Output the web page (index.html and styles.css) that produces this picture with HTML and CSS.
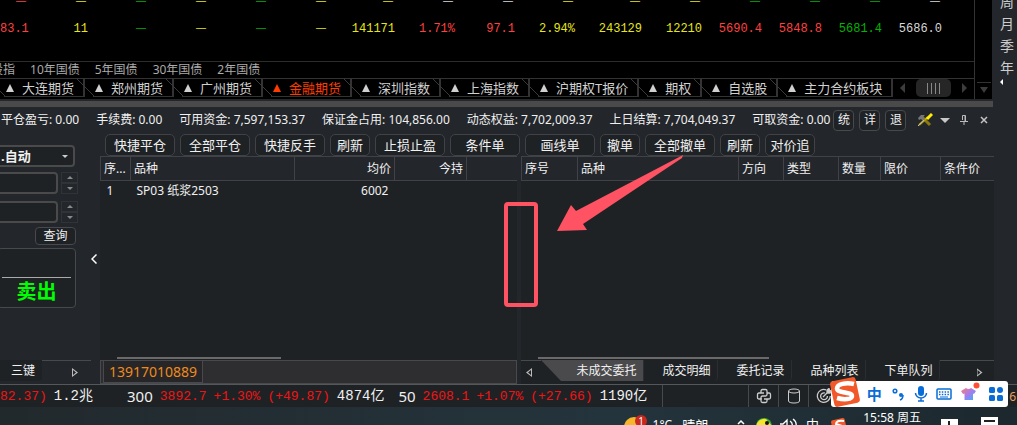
FILE: index.html
```html
<!DOCTYPE html>
<html lang="zh-CN">
<head>
    <meta charset="UTF-8">
    <meta name="viewport" content="width=device-width, initial-scale=1.0">
    <title>期货交易</title>
    <link rel="stylesheet" href="styles.css">
</head>
<body>
    <div class="top">
        <div class="market">
            <table class="quotes">
                <colgroup>
                    <col class="c-first"><col><col><col><col><col><col class="c-wide"><col>
                    <col><col><col class="c-wide"><col><col><col><col><col><col class="c-rest">
                </colgroup>
                <tr class="dashes">
                    <td class="red">—</td><td class="yellow">—</td><td class="green">—</td><td class="yellow">—</td>
                    <td class="green">—</td><td class="yellow">—</td><td class="yellow">—</td><td>—</td>
                    <td>—</td><td class="yellow">—</td><td class="yellow">—</td><td class="yellow">—</td>
                    <td class="green">—</td><td class="green">—</td><td class="green">—</td><td>—</td><td></td>
                </tr>
                <tr>
                    <td class="red">83.1</td><td class="yellow">11</td><td class="green dash">—</td><td class="yellow dash">—</td>
                    <td class="green dash">—</td><td class="yellow dash">—</td><td class="yellow">141171</td><td class="red">1.71%</td>
                    <td class="red">97.1</td><td class="yellow">2.94%</td><td class="yellow">243129</td><td class="yellow">12210</td>
                    <td class="red">5690.4</td><td class="red">5848.8</td><td class="green">5681.4</td><td>5686.0</td><td></td>
                </tr>
            </table>
            <div class="groups">
                <span>股指</span><span>10年国债</span><span>5年国债</span><span>30年国债</span><span>2年国债</span>
            </div>
            <div class="boards">
                <button>大连期货</button>
                <button>郑州期货</button>
                <button>广州期货</button>
                <button class="active">金融期货</button>
                <button>深圳指数</button>
                <button>上海指数</button>
                <button>沪期权T报价</button>
                <button>期权</button>
                <button>自选股</button>
                <button>主力合约板块</button>
                <div class="hscroll">
                    <i class="tri-left"></i>
                    <div class="thumb"><i></i><i></i><i></i><i></i></div>
                    <i class="tri-right"></i>
                </div>
            </div>
        </div>
        <div class="vscroll"><i class="tri-down"></i></div>
        <div class="periods">
            <span>周</span><span>月</span><span>季</span><span>年</span>
            <i class="tri-left"></i>
        </div>
    </div>

    <div class="splitter"></div>

    <div class="trade">
        <div class="info">
            <span>平仓盈亏: 0.00</span>
            <span>手续费: 0.00</span>
            <span>可用资金: 7,597,153.37</span>
            <span>保证金占用: 104,856.00</span>
            <span>动态权益: 7,702,009.37</span>
            <span>上日结算: 7,704,049.37</span>
            <span>可取资金: 0.00</span>
            <div class="tools">
                <button>统</button>
                <button>详</button>
                <button>退</button>
            </div>
            <svg class="wrench" width="16" height="14" viewBox="0 0 16 14">
                <path d="M4 3l9 9" stroke="#8c7a10" stroke-width="3"/>
                <path d="M2 12l9-8" stroke="#b9a800" stroke-width="2"/>
                <path d="M10 6l5-5" stroke="#ffee00" stroke-width="3"/>
                <path d="M1 5l3-3h4l-2 2 2 2-2 2-2-2-2 1z" fill="#777"/>
                <path d="M1 13l6-6" stroke="#bbb" stroke-width="1"/>
            </svg>
            <i class="tri-menu"></i>
            <svg class="pin" width="8" height="10" viewBox="0 0 8 10" fill="none" stroke="#bbb">
                <path d="M2.500 5V.5h3V6M0 6.500h8M4 7v3M5 1v5"/>
            </svg>
            <svg class="close" width="8" height="8" viewBox="0 0 8 8" stroke="#c4c4c4" stroke-width="1.500">
                <path d="M1 1l6 6M7 1l-6 6"/>
            </svg>
        </div>

        <div class="body">
            <div class="order">
                <div class="combo">
                    <select aria-label="手数模式"><option>.自动</option></select>
                    <i class="tri-down"></i>
                </div>
                <div class="spin">
                    <input type="text" aria-label="手数">
                    <div class="steps"><button aria-label="加"><i class="tri-up"></i></button><button aria-label="减"><i class="tri-down"></i></button></div>
                </div>
                <div class="spin">
                    <input type="text" aria-label="价格">
                    <div class="steps"><button aria-label="加"><i class="tri-up"></i></button><button aria-label="减"><i class="tri-down"></i></button></div>
                </div>
                <button class="query">查询</button>
                <button class="sell"><span>卖出</span></button>
                <button class="fold" aria-label="收起">
                    <svg width="6" height="10" viewBox="0 0 6 10" fill="none" stroke="#fff" stroke-width="1.500"><path d="M5.500.5L1 5l4.500 4.500"/></svg>
                </button>
                <div class="order-tabs">
                    <button>三键</button>
                    <div class="rest"><i class="play"></i></div>
                </div>
            </div>

            <div class="main">
                <div class="actions">
                    <button class="w4">快捷平仓</button>
                    <button class="w4">全部平仓</button>
                    <button class="w4">快捷反手</button>
                    <button class="w2">刷新</button>
                    <button class="w4">止损止盈</button>
                    <button class="w4">条件单</button>
                    <button class="w4">画线单</button>
                    <button class="w2">撤单</button>
                    <button class="w4">全部撤单</button>
                    <button class="w2">刷新</button>
                    <button class="w3">对价追</button>
                </div>
                <div class="panes">
                    <div class="pane positions">
                        <table class="grid">
                            <colgroup><col class="p1"><col class="p2"><col class="p3"><col class="p4"><col></colgroup>
                            <tr><th>序...</th><th>品种</th><th class="num">均价</th><th class="num">今持</th><th></th></tr>
                            <tr><td>1</td><td>SP03 纸浆2503</td><td class="num">6002</td><td></td><td></td></tr>
                        </table>
                        <div class="bar"></div>
                        <div class="accounts"><button>13917010889</button></div>
                    </div>
                    <div class="pane pending">
                        <table class="grid">
                            <colgroup><col class="o1"><col class="o2"><col class="o3"><col class="o4"><col class="o5"><col class="o6"><col></colgroup>
                            <tr><th>序号</th><th>品种</th><th>方向</th><th>类型</th><th>数量</th><th>限价</th><th>条件价</th></tr>
                        </table>
                        <div class="bar"></div>
                        <div class="views">
                            <div class="prev"><i class="play back"></i></div>
                            <button class="active">未成交委托</button>
                            <button>成交明细</button>
                            <button>委托记录</button>
                            <button>品种列表</button>
                            <button>下单队列</button>
                            <div class="rest"><i class="play"></i></div>
                        </div>
                    </div>
                </div>
            </div>
        </div>

        <!-- marker over the divider between the two tables -->
        <svg class="mark" width="190" height="160" viewBox="0 0 190 160">
            <rect x="6" y="54" width="30" height="101" rx="2" fill="none" stroke="#ff5262" stroke-width="4"/>
            <path d="M57 81L71 55 76 61 183 5 182 8 83 74 87 80z" fill="#ff5262"/>
        </svg>
    </div>

    <div class="status">
        <div class="index"><b>82.37)</b><span>1.2兆</span></div>
        <div class="index"><strong>300</strong><b>3892.7</b><b>+1.30%</b><b>(+49.87)</b><span>4874亿</span></div>
        <div class="index"><strong>50</strong><b>2608.1</b><b>+1.07%</b><b>(+27.66)</b><span>1190亿</span></div>
        <div class="cells">
            <div class="cell gap"></div>
            <div class="cell">
                <svg width="16" height="16" viewBox="0 0 16 16" fill="none" stroke="#ccc" stroke-width="1.300">
                    <path d="M5 5V3q0-1.500 1.500-1.500h3Q11 1.500 11 3v3.500Q11 8 9.500 8h-3Q5 8 5 9.500V11H3q-1.500 0-1.500-1.500v-3Q1.500 5 3 5h5"/>
                    <path d="M11 5h2q1.500 0 1.500 1.500v3Q14.500 11 13 11H8M5 10v3q0 1.500 1.500 1.500h3Q11 14.500 11 13v-2"/>
                </svg>
            </div>
            <div class="cell">
                <svg width="14" height="16" viewBox="0 0 14 16" fill="none" stroke="#ccc">
                    <ellipse cx="7" cy="3" rx="5.500" ry="2"/><path d="M1.500 3v10c0 2.700 11 2.700 11 0V3"/>
                </svg>
            </div>
            <div class="cell">
                <svg width="16" height="16" viewBox="0 0 16 16" fill="none" stroke="#ccc" stroke-width="1.300">
                    <path d="M10 1.800A6.500 6.500 0 1 0 14.300 8M9 5a3.400 3.400 0 1 0 2.400 3"/><path d="M7 9l5-5M11 2v3h3l1.500-2-2-.5L13 .5z" fill="#ccc"/>
                </svg>
            </div>
        </div>
        <span class="tail">6</span>

        <div class="ime">
            <svg class="sogou" width="32" height="32" viewBox="0 0 32 32">
                <rect x="3" y="3" width="26" height="26" rx="3" fill="#f1592a" transform="rotate(-12 16 16)"/>
                <path d="M25 8C17 6 8 8 8 12.500c0 5 15 3 15 7.500 0 3.500-8 4-15 2" fill="none" stroke="#fff" stroke-width="4.500"/>
            </svg>
            <button class="zh">中</button>
            <svg width="14" height="16" viewBox="0 0 14 16"><circle cx="4" cy="5" r="1.800" fill="none" stroke="#0a6cd6" stroke-width="1.500"/><circle cx="10" cy="9" r="2" fill="#0a6cd6"/><path d="M12 9q0 4-3 5" fill="none" stroke="#0a6cd6" stroke-width="1.500"/></svg>
            <svg width="14" height="16" viewBox="0 0 14 16"><rect x="4" y="0" width="6" height="10" rx="3" fill="#0a6cd6"/><path d="M1.500 7a5.500 5 0 0 0 11 0M7 12v3M4 15h6" fill="none" stroke="#0a6cd6" stroke-width="1.500"/></svg>
            <svg width="16" height="12" viewBox="0 0 16 12"><rect x="1" y="1" width="14" height="10" rx="1" fill="none" stroke="#0a6cd6" stroke-width="1.500"/><path d="M3 4h10M3 6.500h10" stroke="#0a6cd6" stroke-width="1.500" stroke-dasharray="1.500 1.300"/><path d="M4 9h8" stroke="#0a6cd6"/></svg>
            <svg class="skin" width="19" height="19" viewBox="0 0 19 19">
                <defs><linearGradient id="shirt" x1="0" y1="0" x2="1" y2="1"><stop offset="0" stop-color="#ff7c72"/><stop offset=".5" stop-color="#a77bee"/><stop offset="1" stop-color="#2fb4ff"/></linearGradient></defs>
                <path d="M5 6q2.500 2 5 0l5 3-2 3-1-.5V18H3.500v-6.500L2 12 0 9z" fill="url(#shirt)"/>
                <circle cx="15.500" cy="3.500" r="3" fill="#ff4f32"/>
            </svg>
            <svg width="14" height="14" viewBox="0 0 14 14" fill="#0a6cd6"><rect width="6" height="6" rx="1.500"/><circle cx="11" cy="3" r="3"/><rect y="8" width="6" height="6" rx="1.500"/><rect x="8" y="8" width="6" height="6" rx="1.500"/></svg>
        </div>
    </div>

    <div class="taskbar">
        <svg class="weather" width="24" height="22" viewBox="0 0 24 22"><circle cx="11" cy="12" r="10" fill="#f5b62b"/><circle cx="18" cy="6" r="6" fill="#c8281e"/><text x="18" y="10" text-anchor="middle">1</text></svg>
        <span>1°C</span>
        <span class="sky">晴朗</span>
        <svg class="tray" width="110" height="18" viewBox="0 0 110 18">
            <path d="M2 17l3-3 3 3" fill="none" stroke="#fff" stroke-width="1.500"/>
            <circle cx="28" cy="19" r="8" fill="#35a834"/><path d="M20.500 17Q24 11 30 12l6 7H21z" fill="#f5e52a"/><circle cx="31" cy="16" r="2" fill="#111"/>
            <path d="M44 17h3l4-4v6M54 14q3 2 2 5M57 12q4 3 3 7" fill="none" stroke="#fff" stroke-width="1.300"/>
            <rect x="96" y="12" width="14" height="14" rx="2" fill="#f1592a" transform="rotate(-12 103 19)"/><path d="M108 14q-8-1-8 3l6 2" fill="none" stroke="#fff" stroke-width="2"/>
            <text x="70" y="22">中</text>
        </svg>
        <span class="clock">15:58 周五</span>
        <svg class="right" width="60" height="18" viewBox="0 0 60 18"><path d="M0 12h17v6H0zM40 10h17v8H40z" fill="#fff"/><path d="M8 14v4M43 14h11" stroke="#222" stroke-width="2"/></svg>
    </div>
</body>
</html>
```
FILE: styles.css
```css
* {
    box-sizing: border-box;
}
body {
    margin: 0;
    min-height: 100vh;
    display: flex;
    flex-direction: column;
    overflow: hidden;
    background-color: #23262b;
    color: #f0f0f0;
    font-family: "Noto Sans", "Noto Sans CJK SC", sans-serif;
    font-size: 12px;
    line-height: 16px;
}
button, select, input {
    font: inherit;
    color: inherit;
    background: none;
    border: 0;
    padding: 0;
    margin: 0;
    white-space: nowrap;
}
table {
    border-collapse: collapse;
    table-layout: fixed;
    width: 100%;
}
.red {
    color: #ff4040;
}
.yellow {
    color: #e6e61a;
}
.green {
    color: #00b400;
}

/* triangles */
.tri-up, .tri-down, .tri-left, .tri-right, .tri-menu {
    display: block;
    width: 0;
    height: 0;
    border: 3px solid transparent;
}
.tri-up {
    border-top: 0;
    border-bottom-color: #8a8a8a;
}
.tri-down {
    border-bottom: 0;
    border-top-color: #8a8a8a;
}
.tri-left {
    border-width: 5px;
    border-left: 0;
    border-right-color: #3c3c3c;
}
.tri-right {
    border-width: 5px;
    border-right: 0;
    border-left-color: #3c3c3c;
}
.tri-menu {
    border-width: 5px;
    border-bottom: 0;
    border-top-color: #c8c8c8;
}
.play {
    width: 6px;
    height: 9px;
    background-color: #bbb;
    clip-path: polygon(0 0, 100% 50%, 0 100%, 0 0, 1px 2px, 1px 7px, 4px 50%, 1px 2px);
}
.play.back {
    transform: scaleX(-1);
}

/* market */
.top {
    display: flex;
    height: 99px;
    overflow: hidden;
    background-color: #000;
}
.market {
    flex: 1;
    min-width: 0;
    border-right: 1px solid #333;
}
.quotes {
    margin-top: -12px;
    margin-bottom: 19px;
    color: #d8d8d8;
    font-family: "Liberation Mono", monospace;
}
.quotes col {
    width: 60px;
}
.quotes .c-first {
    width: 28px;
}
.quotes .c-wide {
    width: 67px;
}
.quotes .c-rest {
    width: auto;
}
.quotes td {
    height: 26px;
    padding: 2px 0 0;
    text-align: right;
}
.quotes tr + tr td {
    height: 28px;
}
.quotes .dashes td, .quotes .dash {
    padding: 0 2px 0 0;
    font-family: "Liberation Sans", sans-serif;
    font-size: 10px;
}
.groups {
    display: flex;
    gap: 15px;
    height: 17px;
    margin-left: -9px;
    border-top: 1px solid #2c2c2c;
    color: #aaa;
}
.boards {
    display: flex;
    height: 19px;
    margin-left: -4px;
    border-top: 1px solid #333;
}
.boards button {
    position: relative;
    flex: none;
    display: flex;
    align-items: center;
    height: 18px;
    padding: 0 9px 0 10px;
    border-right: 2px solid #333;
    color: #d0d0d0;
    font-size: 13px;
    background: linear-gradient(#333, #333) 8px 100% / 100% 1px no-repeat;
}
.boards button::before {
    content: "";
    margin-right: 8px;
    border: 4px solid transparent;
    border-top: 0;
    border-bottom: 8px solid #d0d0d0;
}
.boards button::after {
    content: "";
    position: absolute;
    left: -8px;
    top: 0;
    width: 17px;
    height: 17px;
    background: linear-gradient(to top right, transparent 48%, #3a3a3a 48%, #3a3a3a 52%, transparent 52%);
}
.boards .active {
    color: #ff3c00;
}
.boards .active::before {
    border-bottom-color: #ff3c00;
}
.hscroll {
    flex: 1;
    display: flex;
    align-items: center;
    justify-content: space-between;
    padding: 0 7px;
}
.thumb {
    display: flex;
    justify-content: center;
    align-items: center;
    gap: 2px;
    width: 35px;
    height: 18px;
    border-radius: 5px;
    background-color: #262626;
}
.thumb i {
    width: 1px;
    height: 11px;
    margin-right: 1px;
    background-color: #888;
}
.vscroll {
    display: flex;
    flex-direction: column;
    align-items: center;
    justify-content: flex-end;
    width: 17px;
    padding-bottom: 6px;
}
.vscroll .tri-down {
    border-width: 6px 4px 0;
    border-top-color: #3c3c3c;
}
.vscroll::before {
    content: "";
    width: 14px;
    height: 1px;
    margin-bottom: 4px;
    background-color: #333;
}
.periods {
    display: flex;
    flex-direction: column;
    align-items: center;
    width: 25px;
    padding-left: 5px;
    background-color: #23262b;
    color: #ccc;
    font-size: 14px;
    line-height: 22px;
}
.periods span:first-child {
    margin-top: -9px;
}
.periods .tri-left {
    margin: 0 12px 0 0;
    border-width: 3px;
    border-left: 0;
    border-right-color: #fff;
}
.splitter {
    height: 6px;
    margin: 2px 24px 0 0;
    background-color: #4a4a4a;
}

/* trade */
.trade {
    position: relative;
    flex: 1;
    display: flex;
    flex-direction: column;
    padding-right: 23px;
}
.info {
    display: flex;
    align-items: center;
    gap: 17px;
    height: 26px;
    padding-left: 1px;
    white-space: nowrap;
}
.tools {
    display: flex;
    gap: 5px;
    margin-left: -14px;
}
.tools button {
    width: 21px;
    height: 21px;
    border: 1px solid #47494c;
    border-radius: 4px;
    background-color: #1f2225;
}
.wrench {
    margin-left: -6px;
}
.info .tri-menu {
    margin-left: -10px;
}
.info .pin {
    margin-left: -7px;
}
.info .close {
    margin-left: -5px;
}
.body {
    flex: 1;
    display: flex;
}

/* order form */
.order {
    position: relative;
    display: flex;
    flex-direction: column;
    width: 100px;
    padding-top: 12px;
}
.combo {
    display: flex;
    align-items: center;
    width: 79px;
    height: 22px;
    margin-left: -4px;
    border: 2px solid #4a4a4a;
    border-radius: 4px;
    background-color: #1f2225;
}
.combo select {
    flex: 1;
    appearance: none;
    padding-left: 3px;
    font-size: 13px;
    font-weight: bold;
}
.combo .tri-down {
    margin-right: 5px;
    border-top-color: #ccc;
}
.spin {
    display: flex;
    align-items: center;
    gap: 3px;
    width: 82px;
    height: 24px;
    margin: 4px 0 1px -4px;
}
.spin input {
    width: 62px;
    height: 22px;
    border: 2px solid #4a4a4a;
    border-radius: 4px;
    background-color: #1f2225;
}
.steps {
    display: flex;
    flex-direction: column;
}
.steps button {
    display: flex;
    align-items: center;
    justify-content: center;
    width: 17px;
    height: 11px;
    border: 1px solid #303338;
}
.query {
    width: 41px;
    height: 18px;
    margin: 2px 0 3px 35px;
    border: 1px solid #47494c;
    border-radius: 4px;
    background-color: #1f2225;
    line-height: 14px;
}
.sell {
    display: flex;
    align-items: flex-end;
    width: 79px;
    height: 60px;
    margin-left: -3px;
    padding: 0 4px;
    border: 1px solid #47494c;
    border-radius: 4px;
    background-color: #1f2225;
}
.sell span {
    flex: 1;
    height: 30px;
    border-top: 1px solid #aaa;
    color: #00ff00;
    font-family: "Liberation Serif", "Noto Sans CJK SC", serif;
    font-size: 20px;
    font-weight: bold;
    line-height: 28px;
}
.fold {
    position: absolute;
    right: 3px;
    top: 121px;
    height: 10px;
    line-height: 0;
}
.order-tabs {
    display: flex;
    height: 24px;
    margin-top: auto;
}
.order-tabs button {
    width: 42px;
    height: 21px;
    padding-left: 4px;
    border-radius: 0 0 4px 0;
    background-color: #1f2225;
}
.order-tabs .rest {
    flex: 1;
    display: flex;
    align-items: center;
    justify-content: center;
    margin-right: 9px;
    padding-left: 17px;
    border-top: 1px solid #47494c;
}

/* tables */
.main {
    flex: 1;
    min-width: 0;
    display: flex;
    flex-direction: column;
}
.actions {
    display: flex;
    gap: 5px;
    padding: 1px 0 0 5px;
}
.actions button {
    height: 22px;
    border: 1px solid #404247;
    border-radius: 5px;
    background-color: #1f2225;
    font-size: 13px;
    line-height: 20px;
}
.w4 {
    width: 70px;
}
.w3 {
    width: 50px;
}
.w2 {
    width: 40px;
}
.panes {
    flex: 1;
    display: flex;
    gap: 4px;
}
.pane {
    flex: 417;
    min-width: 0;
    display: flex;
    flex-direction: column;
    background-color: #1f2225;
}
.pending {
    flex: 473;
}
.grid th, .grid td {
    overflow: hidden;
    padding: 0 3px;
    text-align: left;
    font-weight: normal;
    white-space: nowrap;
}
.grid th {
    height: 24px;
    border: 1px solid #404247;
    background-color: #23262b;
}
.grid th:last-child {
    border-right: 0;
}
.grid td {
    height: 20px;
    padding: 0 6px;
}
.grid .num {
    text-align: right;
}
.p1 {
    width: 30px;
}
.p2 {
    width: 164px;
}
.p3 {
    width: 100px;
}
.p4 {
    width: 72px;
}
.o1 {
    width: 56px;
}
.o2 {
    width: 161px;
}
.o3 {
    width: 45px;
}
.o4 {
    width: 55px;
}
.o5 {
    width: 42px;
}
.o6 {
    width: 60px;
}
.bar {
    width: 164px;
    height: 2px;
    margin: auto 0 1px 17px;
    background-color: #6a6a6a;
}
.pending .bar {
    width: 231px;
}
.accounts {
    display: flex;
    height: 24px;
    padding-left: 2px;
    border: 1px solid #47494c;
    background-color: #2e2e30;
}
.accounts button {
    padding: 0 5px;
    border: 1px solid #47494c;
    border-width: 0 1px 1px;
    background-color: #262628;
    color: #f08a1c;
    font-size: 14px;
}
.views {
    display: flex;
    height: 24px;
}
.views .prev {
    display: flex;
    align-items: center;
    width: 20px;
    padding-left: 5px;
    border-top: 1px solid #47494c;
}
.views button {
    flex: none;
    height: 21px;
    width: 74px;
    padding-left: 12px;
    border-right: 1px solid #2a2d31;
    border-radius: 0 0 4px 4px;
}
.views .active {
    width: 103px;
    padding-left: 29px;
    border-radius: 0;
    background-color: #4a4a4c;
    clip-path: polygon(0 0, 100% 0, 100% 100%, 20px 100%);
}
.views .rest {
    flex: 1;
    display: flex;
    align-items: center;
    justify-content: center;
    padding-left: 25px;
    border-top: 1px solid #47494c;
}
.mark {
    position: absolute;
    left: 500px;
    top: 43px;
}

/* status bar */
.status {
    position: relative;
    display: flex;
    height: 23px;
    border-top: 1px solid #55585b;
    background-color: #1f2225;
    line-height: 23px;
    white-space: nowrap;
}
.index {
    display: flex;
    gap: 7px;
    margin-right: 14px;
    font-family: "Liberation Mono", "Noto Sans CJK SC", monospace;
    font-size: 13px;
}
.index:first-child {
    margin: 0 34px 0 0;
}
.index b {
    color: #f01414;
    font-weight: normal;
}
.index span {
    font-size: 14px;
}
.index strong {
    font-family: "Noto Sans", sans-serif;
    font-size: 15px;
    font-weight: normal;
}
.cells {
    display: flex;
    margin-left: auto;
    margin-right: 179px;
}
.cell {
    display: flex;
    align-items: center;
    justify-content: center;
    width: 30px;
    border-left: 1px solid #47494c;
}
.cell.gap {
    width: 86px;
}
.tail {
    position: absolute;
    right: 1px;
    color: #e8a060;
}
.ime {
    position: absolute;
    right: 9px;
    top: -4px;
    display: flex;
    align-items: center;
    justify-content: space-between;
    width: 177px;
    height: 26px;
    padding: 0 5px 0 0;
    border-radius: 3px;
    background-color: #fff;
}
.sogou {
    margin: -4px -3px 0 -2px;
}
.ime .zh {
    color: #0a6cd6;
    font-size: 15px;
    font-weight: bold;
}
.skin {
    margin-top: -5px;
}

/* taskbar */
.taskbar {
    display: flex;
    height: 18px;
    padding-right: 16px;
    overflow: hidden;
    background: linear-gradient(to right, #22292d, #24343c 60%, #1c282e);
    color: #fff;
}
.taskbar > span {
    padding-top: 10px;
}
.taskbar .weather {
    flex: none;
    margin: 8px 6px 0 auto;
}
.weather text {
    fill: #fff;
    font-size: 10px;
}
.taskbar .sky {
    margin: 0 28px 0 10px;
    font-size: 13px;
}
.tray {
    flex: none;
}
.tray text {
    fill: #fff;
    font-size: 13px;
}
.taskbar .clock {
    margin: 0 20px 0 17px;
    padding-top: 3px;
}
.right {
    flex: none;
}
```
